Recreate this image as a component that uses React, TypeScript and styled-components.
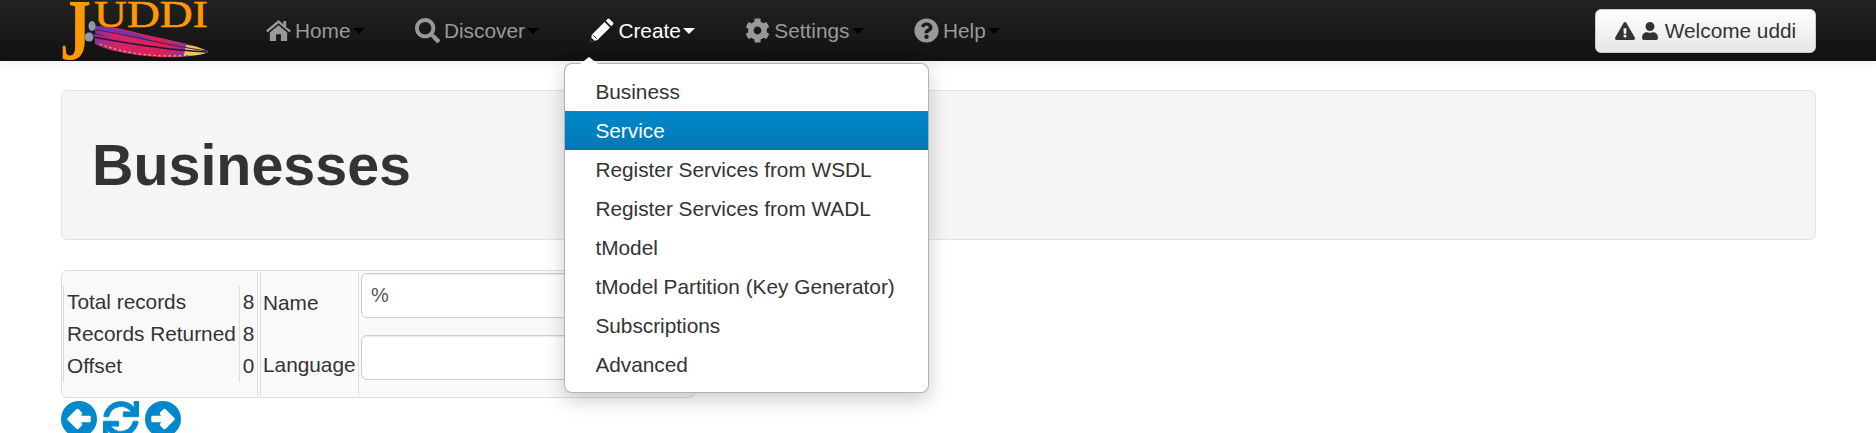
import React from "react"
import styled, { createGlobalStyle } from "styled-components"
import { FaSearch, FaCog, FaQuestionCircle, FaExclamationTriangle, FaUser, FaSync } from "react-icons/fa"

const GlobalStyle = createGlobalStyle`
  html, body {
    margin: 0;
    height: 433px;
    overflow: hidden;
    background: #fff;
    font-family: "Liberation Sans", Arial, sans-serif;
    font-size: 20.8px;
    color: #333;
  }
`

const Navbar = styled.nav`
  position: relative;
  z-index: 5;
  display: flex;
  align-items: center;
  height: 61px;
  padding-right: 60px;
  background: linear-gradient(#222222, #111111);
  box-shadow: 0 1px 10px rgba(0, 0, 0, 0.1);
`

const LogoBox = styled.svg`
  flex: none;
  width: 160px;
  height: 61px;
  margin-left: 56px;
`

const NavList = styled.ul`
  display: flex;
  flex: 1;
  height: 100%;
  margin: 0 0 0 25px;
  padding: 0;
  list-style: none;
`

const NavItem = styled.li<{ $open?: boolean }>`
  position: relative;
  display: flex;
  align-items: center;
  gap: 4px;
  padding: 0 25px;
  color: ${(p) => (p.$open ? "#fff" : "#999")};
  svg {
    flex: none;
    width: 25px;
    height: 25px;
  }
`

const Caret = styled.span<{ $open?: boolean }>`
  width: 0;
  height: 0;
  margin-left: -1.5px;
  border-left: 6px solid transparent;
  border-right: 6px solid transparent;
  border-top: 6px solid ${(p) => (p.$open ? "#fff" : "#000")};
`

const Menu = styled.ul`
  position: absolute;
  top: 63px;
  left: 0;
  z-index: 10;
  width: 363px;
  margin: 0;
  padding: 8px 0;
  list-style: none;
  background: #fff;
  border: 1px solid rgba(0, 0, 0, 0.3);
  border-radius: 8px;
  box-shadow: 0 7px 20px rgba(0, 0, 0, 0.2);

  &::before {
    content: "";
    position: absolute;
    top: -7px;
    left: 15px;
    border-left: 9px solid transparent;
    border-right: 9px solid transparent;
    border-bottom: 7px solid #fff;
  }
`

const MenuItem = styled.li<{ $active?: boolean }>`
  height: 39px;
  padding-left: 30px;
  line-height: 39px;
  white-space: nowrap;
  color: ${(p) => (p.$active ? "#fff" : "#333")};
  background: ${(p) => (p.$active ? "linear-gradient(#0088cc, #0077b3)" : "none")};
`

const WelcomeButton = styled.button`
  display: flex;
  align-items: center;
  justify-content: center;
  gap: 6px;
  width: 221px;
  height: 44px;
  padding: 0;
  font: inherit;
  color: #333;
  background: linear-gradient(#ffffff, #e6e6e6);
  border: 1px solid #ccc;
  border-radius: 6px;
`

const WarningIcon = styled(FaExclamationTriangle)`
  font-size: 20px;
`

const UserIcon = styled(FaUser)`
  font-size: 18px;
`

const Page = styled.main`
  padding: 29px 60px 0 61px;
`

const Hero = styled.section`
  display: flex;
  align-items: center;
  box-sizing: border-box;
  height: 150px;
  padding-left: 30px;
  background: #f5f5f5;
  border: 1px solid #e3e3e3;
  border-radius: 6px;
`

const Title = styled.h1`
  margin: 0;
  font-size: 57.4px;
  font-weight: bold;
  color: #333;
`

const Panel = styled.section`
  display: flex;
  box-sizing: border-box;
  width: 634px;
  height: 128px;
  margin-top: 30px;
  padding: 1px;
  background: #f9f9f9;
  border: 1px solid #ddd;
  border-radius: 6px;
`

const StatsCell = styled.div`
  display: flex;
  align-items: center;
  flex: none;
  box-sizing: border-box;
  width: 195px;
  border-right: 1px solid #ddd;
`

const StatsTable = styled.table`
  border-collapse: collapse;
  td {
    height: 32px;
    padding: 0 3px;
    border-left: 1px solid #ddd;
    white-space: nowrap;
  }
  td:last-child {
    padding-right: 5px;
  }
`

const FormGrid = styled.div`
  display: grid;
  flex: 1;
  grid-template-columns: 98px 1fr;
  grid-template-rows: 62px 1fr;
  margin-left: 2px;
  border-left: 1px solid #ddd;
`

const FieldLabel = styled.label`
  display: flex;
  align-items: center;
  padding-left: 2px;
  border-right: 1px solid #ddd;
`

const InputCell = styled.div`
  padding: 1px 3px 0 2px;
`

const TextInput = styled.input`
  display: block;
  box-sizing: border-box;
  width: 100%;
  height: 45px;
  padding: 0 9px;
  font: inherit;
  font-size: 20px;
  color: #555;
  background: #fff;
  border: 1px solid #ccc;
  border-radius: 6px;
  box-shadow: inset 0 1px 1px rgba(0, 0, 0, 0.075);
`

const Pager = styled.div`
  display: flex;
  gap: 6px;
  margin-top: 3px;
  color: #0088cc;
`

const ArrowCircle = styled.svg<{ $flip?: boolean }>`
  display: block;
  width: 36px;
  height: 36px;
  transform: ${(p) => (p.$flip ? "scaleX(-1)" : "none")};
`

const SyncIcon = styled(FaSync)`
  display: block;
  width: 36px;
  height: 36px;
  stroke: currentColor;
  stroke-width: 12px;
`

const menuItems = [
  "Business",
  "Service",
  "Register Services from WSDL",
  "Register Services from WADL",
  "tModel",
  "tModel Partition (Key Generator)",
  "Subscriptions",
  "Advanced",
]

function Logo() {
  return (
    <LogoBox viewBox="56 0 160 61">
      <defs>
        <linearGradient id="blade" x1="0" x2="1" y1="0" y2="0">
          <stop offset="0" stopColor="#8a2f98" />
          <stop offset="0.18" stopColor="#d0246c" />
          <stop offset="0.6" stopColor="#dc2058" />
          <stop offset="0.82" stopColor="#8a3a9a" />
          <stop offset="1" stopColor="#c87860" />
        </linearGradient>
      </defs>
      <text
        transform="translate(60 59) scale(0.72 1)"
        fontFamily="Liberation Serif"
        fontWeight="bold"
        fontSize="86"
        fill="#ff9900"
      >
        J
      </text>
      <text
        x="94"
        y="27"
        fontFamily="Liberation Serif"
        fontSize="38"
        fill="#ff9900"
        stroke="#ff9900"
        strokeWidth="0.5"
        textLength="114"
        lengthAdjust="spacingAndGlyphs"
      >
        UDDI
      </text>
      <path d="M95 26 C110 26 128 30 142 34 C165 39 192 44 208 51 C190 51 150 47 125 41 C112 38 100 35 95 33 Z" fill="url(#blade)" />
      <path d="M94 34 C110 37 140 43 165 47 C185 49 198 50 208 52 C200 56 180 58 160 57 C135 56 108 51 95 44 Z" fill="url(#blade)" />
      <path d="M96 28 C115 29 130 34 150 40" stroke="#6a38b0" strokeWidth="3" fill="none" />
      <path d="M100 44 C125 54 160 58 190 55" stroke="#e8c860" strokeWidth="1.2" strokeDasharray="2 3" fill="none" />
      <path d="M186 45 C196 46 204 49 208 52 C202 55 194 56 184 55 Z" fill="#e8c860" />
      <path d="M93 37 C120 42 165 50 207 52" stroke="#2a1030" strokeWidth="1.4" fill="none" />
      <path d="M96 30 C120 33 165 45 207 51" stroke="#4a1a50" strokeWidth="1" fill="none" />
      <ellipse cx="92" cy="26" rx="3.5" ry="5" fill="#8a9aa8" />
      <ellipse cx="89" cy="37" rx="4.5" ry="4.5" fill="#8a9aa8" />
    </LogoBox>
  )
}

function HomeIcon() {
  return (
    <svg viewBox="0 0 26 26" fill="currentColor">
      <path d="M0 13 L13 2 L18 6.5 V3 H21 V9.5 L26 13 L24.5 15 L13 5.5 L1.5 15 Z" />
      <path d="M4 15 L13 7.5 L22 15 V24 H15.5 V17 H10.5 V24 H4 Z" />
    </svg>
  )
}

function PencilIcon() {
  return (
    <svg viewBox="0 0 25 25" fill="currentColor">
      <path d="M1 24 L3 16.5 L15.5 4 L21 9.5 L8.5 22 Z" />
      <path d="M16.8 2.7 L18.5 1 Q19.5 0 20.5 1 L24 4.5 Q25 5.5 24 6.5 L22.3 8.2 Z" />
      <path d="M1 24 L2.2 19.5 L5.5 22.8 Z" fill="#111" />
      <path d="M4.5 17.5 L7.5 20.5" stroke="#111" strokeWidth="1" />
    </svg>
  )
}

function CircleArrow({ flip }: { flip?: boolean }) {
  return (
    <ArrowCircle viewBox="0 0 36 36" $flip={flip}>
      <circle cx="18" cy="18" r="18" fill="currentColor" />
      <path
        d="M7.5 18 L16.5 9 L20 12.5 L16.5 16 H28.5 V20 H16.5 L20 23.5 L16.5 27 Z"
        fill="#fff"
        stroke="#fff"
        strokeWidth="2.5"
        strokeLinejoin="round"
      />
    </ArrowCircle>
  )
}

export default function App() {
  return (
    <>
      <GlobalStyle />
      <Navbar>
        <Logo />
        <NavList>
          <NavItem>
            <HomeIcon />
            Home
            <Caret />
          </NavItem>
          <NavItem>
            <FaSearch />
            Discover
            <Caret />
          </NavItem>
          <NavItem $open>
            <PencilIcon />
            Create
            <Caret $open />
            <Menu>
              {menuItems.map((item) => (
                <MenuItem key={item} $active={item === "Service"}>
                  {item}
                </MenuItem>
              ))}
            </Menu>
          </NavItem>
          <NavItem>
            <FaCog />
            Settings
            <Caret />
          </NavItem>
          <NavItem>
            <FaQuestionCircle />
            Help
            <Caret />
          </NavItem>
        </NavList>
        <WelcomeButton>
          <WarningIcon />
          <UserIcon />
          Welcome uddi
        </WelcomeButton>
      </Navbar>
      <Page>
        <Hero>
          <Title>Businesses</Title>
        </Hero>
        <Panel>
          <StatsCell>
            <StatsTable>
              <tbody>
                <tr>
                  <td>Total records</td>
                  <td>8</td>
                </tr>
                <tr>
                  <td>Records Returned</td>
                  <td>8</td>
                </tr>
                <tr>
                  <td>Offset</td>
                  <td>0</td>
                </tr>
              </tbody>
            </StatsTable>
          </StatsCell>
          <FormGrid>
            <FieldLabel>Name</FieldLabel>
            <InputCell>
              <TextInput defaultValue="%" />
            </InputCell>
            <FieldLabel>Language</FieldLabel>
            <InputCell>
              <TextInput />
            </InputCell>
          </FormGrid>
        </Panel>
        <Pager>
          <CircleArrow />
          <SyncIcon />
          <CircleArrow flip />
        </Pager>
      </Page>
    </>
  )
}
